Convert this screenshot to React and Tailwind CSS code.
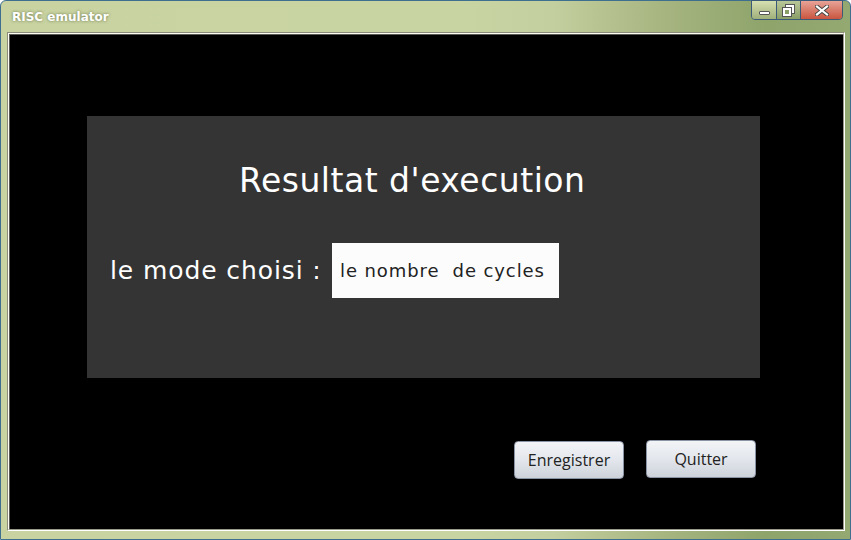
import React from "react";

const dv = { fontFamily: '"DejaVu Sans", sans-serif' };

export default function App() {
  return (
    <div className="w-[851px] h-[540px] overflow-hidden relative" style={{ fontFamily: '"Open Sans", sans-serif' }}>
      <div className="w-full h-full flex flex-col rounded-t-[6px] border border-[#3f6f8f] bg-[linear-gradient(90deg,#c8d3a1_0%,#c9d4a3_55%,#c3cf9e_65%,#a7b581_78%,#8ea46b_90%,#94a872_100%)]">
        {/* title bar */}
        <div className="h-[31px] flex items-start justify-between relative">
          <div
            className="pl-[11px] pt-[7px] text-[12px] font-bold text-white"
            style={{ fontFamily: '"DejaVu Sans", Tahoma, sans-serif', textShadow: "0 0 3px rgba(80,90,50,0.8)" }}
          >
            RISC emulator
          </div>
          <div className="flex mr-[7px] mt-[-1px] h-[20px] border border-[#3a5a78] rounded-b-[4px] overflow-hidden">
            <div className="w-[25px] h-full flex items-center justify-center bg-[linear-gradient(180deg,#d6dfb0,#9fb07a)] border-r border-[#3a5a78]">
              <div className="w-[11px] h-[4px] bg-white border border-[#555] rounded-[1px] mt-[5px]" />
            </div>
            <div className="w-[24px] h-full flex items-center justify-center bg-[linear-gradient(180deg,#b9c798,#8a9e68)] border-r border-[#3a5a78]">
              <div className="relative w-[11px] h-[11px]">
                <div className="absolute right-0 top-0 w-[8px] h-[8px] border-2 border-white outline outline-1 outline-[#555]" />
                <div className="absolute left-0 bottom-0 w-[8px] h-[8px] border-2 border-white bg-[#8a9e68] outline outline-1 outline-[#555]" />
              </div>
            </div>
            <div className="w-[41px] h-full flex items-center justify-center bg-[linear-gradient(180deg,#e8a397,#c9553f)]">
              <svg width="14" height="11" viewBox="0 0 14 11">
                <path d="M2 1.5 L12 9.5 M12 1.5 L2 9.5" stroke="#444" strokeWidth="4" strokeLinecap="square" />
                <path d="M2 1.5 L12 9.5 M12 1.5 L2 9.5" stroke="#fff" strokeWidth="2.2" strokeLinecap="square" />
              </svg>
            </div>
          </div>
        </div>
        {/* client area */}
        <div className="flex-1 ml-[6px] mr-[5px] mb-[8px] border-t border-l border-[#8c8c7a] border-r border-b border-r-white border-b-white">
          <div className="w-full h-full border border-[#fdfdf6] border-r-[#9a9a8c] border-b-[#9a9a8c]">
            <div className="w-full h-full bg-black border-t border-l border-[#5a5a55] flex flex-col">
              <div className="ml-[77px] mt-[81px] w-[673px] h-[262px] bg-[#343434] flex flex-col">
                <div className="mt-[45px] pl-[152px] text-white text-[33px] leading-[40px] tracking-[0.5px] whitespace-nowrap" style={dv}>
                  Resultat d'execution
                </div>
                <div className="mt-[42px] flex items-center">
                  <div className="ml-[23px] w-[222px] text-white text-[25px] leading-[30px] tracking-[0.9px] whitespace-nowrap" style={dv}>
                    le mode choisi :
                  </div>
                  <div
                    className="w-[227px] h-[55px] bg-[#fcfcfc] flex items-center pl-[8px] text-[#222] text-[18px] tracking-[0.9px] whitespace-pre"
                    style={dv}
                  >
                    le nombre  de cycles
                  </div>
                </div>
              </div>
              <div className="mt-[62px] flex items-start gap-[22px] ml-[504px]">
                <button className="mt-[1px] w-[110px] h-[38px] rounded-[4px] border border-[#8a93a3] bg-[linear-gradient(180deg,#f2f4f7_0%,#e3e6ec_50%,#cdd2da_100%)] text-[#222] text-[16px]">
                  Enregistrer
                </button>
                <button className="w-[110px] h-[38px] rounded-[4px] border border-[#8a93a3] bg-[linear-gradient(180deg,#f2f4f7_0%,#e3e6ec_50%,#cdd2da_100%)] text-[#222] text-[16px]">
                  Quitter
                </button>
              </div>
            </div>
          </div>
        </div>
      </div>
    </div>
  );
}
